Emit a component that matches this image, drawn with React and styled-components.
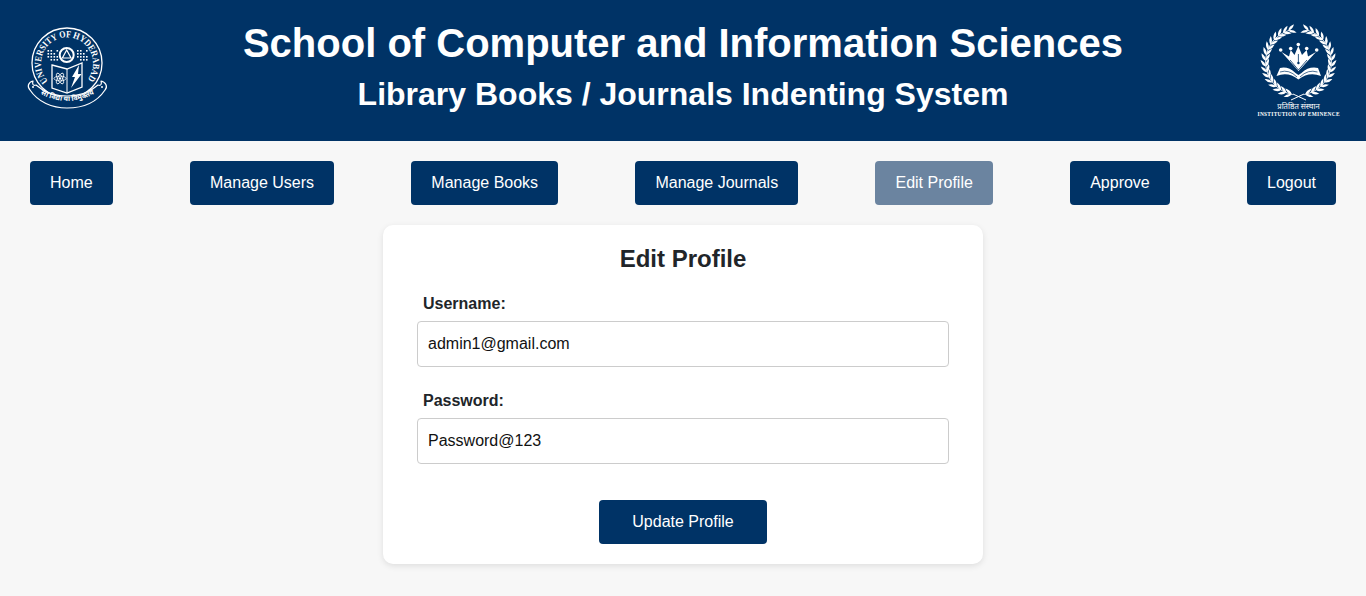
import React from "react";
import styled, { createGlobalStyle } from "styled-components";

const Global = createGlobalStyle`
  html, body { margin: 0; padding: 0; background: #f7f7f7; }
  body { font-family: "Liberation Sans", Arial, sans-serif; color: #212529; }
  * { box-sizing: border-box; }
`;
const Page = styled.div`
  min-height: 596px;
  display: flex;
  flex-direction: column;
  overflow: hidden;
`;
const Header = styled.header`
  height: 141px;
  background: #003366;
  color: #fff;
  display: flex;
  align-items: stretch;
`;
const Logo = styled.svg`
  width: 136px;
  height: 141px;
  flex: none;
  display: block;
`;
const HeaderText = styled.div`
  flex: 1;
  text-align: center;
  padding-top: 20px;
`;
const Title = styled.h1`
  margin: 0 0 10px;
  font-size: 40px;
  line-height: 46px;
  font-weight: 700;
`;
const Subtitle = styled.h2`
  margin: 0;
  font-size: 32px;
  line-height: 37px;
  font-weight: 700;
`;
const Nav = styled.nav`
  display: flex;
  justify-content: space-between;
  padding: 20px 30px;
`;
const NavButton = styled.a`
  height: 44px;
  padding: 0 20px;
  display: flex;
  align-items: center;
  border-radius: 4px;
  font-size: 16px;
  color: #fff;
  background: ${(p) => (p.$active ? "#6b84a0" : "#003366")};
`;
const Main = styled.main`
  display: flex;
  justify-content: center;
`;
const Card = styled.form`
  width: 600px;
  height: 339px;
  padding: 20px 34px;
  background: #fff;
  border-radius: 10px;
  box-shadow: 0 2px 6px rgba(0, 0, 0, 0.1);
  display: flex;
  flex-direction: column;
`;
const CardTitle = styled.h2`
  margin: 0 0 22px;
  text-align: center;
  font-size: 24px;
  line-height: 28px;
  font-weight: 700;
`;
const Field = styled.div`
  display: flex;
  flex-direction: column;
  margin-bottom: 25px;
`;
const Label = styled.label`
  padding-left: 6px;
  margin-bottom: 8px;
  font-size: 16px;
  line-height: 18px;
  font-weight: 700;
`;
const Input = styled.input`
  width: 100%;
  height: 46px;
  padding: 0 10px;
  border: 1px solid #ccc;
  border-radius: 4px;
  font: 16px "Liberation Sans", Arial, sans-serif;
  color: #111;
  background: #fff;
  outline: none;
`;
const Submit = styled.button`
  align-self: center;
  width: 168px;
  height: 44px;
  margin-top: 11px;
  border: 0;
  border-radius: 4px;
  background: #003366;
  color: #fff;
  font: 16px "Liberation Sans", Arial, sans-serif;
`;

const DEV = '"Noto Sans Devanagari","Lohit Devanagari","Noto Sans","DejaVu Sans",sans-serif';

function Seal() {
  const cx = 67, cy = 63;
  const dots = [];
  for (let r = 0; r < 4; r++) {
    for (let c = 0; c < 4; c++) {
      if ((r * 3 + c * 2) % 5 === 4) continue;
      dots.push([47.5 + c * 3, 50 + r * 3]);
      dots.push([77 + c * 3, 50 + r * 3]);
    }
  }
  return (
    <Logo viewBox="0 0 136 141" aria-label="University of Hyderabad seal">
      <defs>
        <path id="sealArc" d={`M ${cx - 19} ${cy + 18} A 26 26 0 1 1 ${cx + 19} ${cy + 18}`} />
        <path id="ribbonArc" d="M 39 93 Q 67 109 96 93" />
      </defs>
      <circle cx={cx} cy={cy} r="35" fill="none" stroke="#fff" strokeWidth="1.3" />
      <text fill="#fff" fontFamily="Liberation Serif, serif" fontSize="9.5" fontWeight="700" textLength="118" lengthAdjust="spacingAndGlyphs">
        <textPath href="#sealArc">UNIVERSITY OF HYDERABAD</textPath>
      </text>
      {dots.map(([x, y], i) => (
        <rect key={i} x={x} y={y} width="1.6" height="1.6" fill="#fff" />
      ))}
      <circle cx="66.7" cy="55" r="7" fill="none" stroke="#fff" strokeWidth="2" />
      <path d="M66.7 50L71 58H62.4Z" fill="none" stroke="#fff" strokeWidth="1.2" />
      <path d="M52 65L67 69L82 63V87L67 93L52 88Z" fill="#003366" stroke="#fff" strokeWidth="1.3" />
      <path d="M67 69V93" stroke="#fff" strokeWidth="1" />
      <path d="M71 88L75 77H72L79 65L78 74H81.5Z" fill="#fff" />
      <g fill="none" stroke="#fff" strokeWidth="0.8">
        <ellipse cx="60" cy="78.5" rx="6" ry="2.4" />
        <ellipse cx="60" cy="78.5" rx="6" ry="2.4" transform="rotate(60 60 78.5)" />
        <ellipse cx="60" cy="78.5" rx="6" ry="2.4" transform="rotate(-60 60 78.5)" />
      </g>
      <circle cx="60" cy="78.5" r="1.2" fill="#fff" />
      <path
        d="M33 81C28 82 27 87 30 90C38 102 52 108 67 108C83 108 97 102 105 90C108 87 106 82 101 81C102 84 101 86 98 85C89 93 79 96 67 96C55 96 45 93 36 85C33 86 32 84 33 81Z"
        fill="#003366"
        stroke="#fff"
        strokeWidth="1.2"
        strokeLinejoin="round"
      />
      <circle cx="33" cy="87" r="1" fill="#fff" />
      <circle cx="102" cy="87" r="1" fill="#fff" />
      <text fill="#fff" fontFamily={DEV} fontSize="7" fontWeight="700">
        <textPath href="#ribbonArc" startOffset="50%" textAnchor="middle">सा विद्या या विमुक्तये</textPath>
      </text>
    </Logo>
  );
}

function Wreath() {
  const cx = 68.5, cy = 62, R = 33;
  const leaves = [];
  for (let a = 102; a <= 252; a += 10) {
    const t = (a * Math.PI) / 180;
    const x = cx + R * Math.cos(t);
    const y = cy + R * Math.sin(t);
    leaves.push({ x, y, rot: a + 90 + 30 });
    leaves.push({ x, y, rot: a + 90 - 30 });
  }
  const p = (a) => {
    const t = (a * Math.PI) / 180;
    return `${(cx + R * Math.cos(t)).toFixed(1)} ${(cy + R * Math.sin(t)).toFixed(1)}`;
  };
  return (
    <>
      {leaves.map((l, i) => (
        <path key={i} d="M0 0Q3.5 -2.6 8.5 0Q3.5 2.6 0 0Z" transform={`translate(${l.x} ${l.y}) rotate(${l.rot})`} fill="#fff" />
      ))}
      <path d={`M ${p(100)} A ${R} ${R} 0 0 1 ${p(256)}`} fill="none" stroke="#fff" strokeWidth="0.9" />
    </>
  );
}

function Emblem() {
  return (
    <Logo viewBox="0 0 136 141" aria-label="Institution of Eminence emblem">
      <Wreath />
      <g transform="translate(137 0) scale(-1 1)">
        <Wreath />
      </g>
      <path d="M61 100L74 94M76 100L63 94" stroke="#fff" strokeWidth="1" />
      <g fill="#fff">
        <circle cx="50.7" cy="50" r="1.8" />
        <circle cx="60.7" cy="48.5" r="1.8" />
        <circle cx="68.3" cy="44.5" r="1.8" />
        <circle cx="76.7" cy="48.5" r="1.8" />
        <circle cx="86.7" cy="50" r="1.8" />
        <path d="M51.5 52L59 56.5L60.7 50L64.5 55L68.3 46L72 55L76.7 50L78 56.5L86 52L68.5 71Z" />
      </g>
      <path d="M68.4 54V62M60 60L68.4 70L77 60" stroke="#003366" strokeWidth="0.8" fill="none" />
      <circle cx="68.4" cy="63" r="1.2" fill="#003366" />
      <path d="M46.5 76Q58 71 68.4 79.5Q79 71 91 76L88 68Q79 66 71.5 73L68.4 75L65.5 73Q58 66 50 68Z" fill="#fff" />
      <path d="M50 72Q59 69 67 77M87.5 72Q78 69 70 77" stroke="#003366" strokeWidth="0.7" fill="none" />
      <text x="68.5" y="108.5" textAnchor="middle" fill="#fff" fontFamily={DEV} fontSize="7.6">प्रतिष्ठित संस्थान</text>
      <text x="68.5" y="115.5" textAnchor="middle" fill="#fff" fontFamily="Liberation Serif, serif" fontSize="5.4" fontWeight="700" textLength="82">INSTITUTION OF EMINENCE</text>
    </Logo>
  );
}

const navItems = ["Home", "Manage Users", "Manage Books", "Manage Journals", "Edit Profile", "Approve", "Logout"];

export default function App() {
  return (
    <Page>
      <Global />
      <Header>
        <Seal />
        <HeaderText>
          <Title>School of Computer and Information Sciences</Title>
          <Subtitle>Library Books / Journals Indenting System</Subtitle>
        </HeaderText>
        <Emblem />
      </Header>
      <Nav>
        {navItems.map((n) => (
          <NavButton key={n} $active={n === "Edit Profile"}>{n}</NavButton>
        ))}
      </Nav>
      <Main>
        <Card onSubmit={(e) => e.preventDefault()}>
          <CardTitle>Edit Profile</CardTitle>
          <Field>
            <Label>Username:</Label>
            <Input defaultValue="admin1@gmail.com" />
          </Field>
          <Field>
            <Label>Password:</Label>
            <Input defaultValue="Password@123" />
          </Field>
          <Submit type="submit">Update Profile</Submit>
        </Card>
      </Main>
    </Page>
  );
}
